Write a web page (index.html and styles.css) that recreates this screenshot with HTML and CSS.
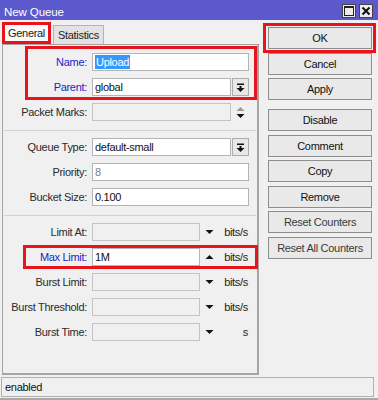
FILE: index.html
```html
<!DOCTYPE html>
<html>
<head>
<meta charset="utf-8">
<title>New Queue</title>
<link rel="stylesheet" href="styles.css">
</head>
<body>
<div class="window">
  <div class="titlebar">
    <span class="title">New Queue</span>
    <div class="wbtns">
      <span class="wbtn"><svg width="12" height="12" viewBox="0 0 12 12"><rect x="1.5" y="1.5" width="9" height="9" fill="none" stroke="#222" stroke-width="1"/><rect x="1.5" y="1.5" width="9" height="1.5" fill="#222"/></svg></span>
      <span class="wbtn"><svg width="12" height="12" viewBox="0 0 12 12"><path d="M2.5 2.5 L9.5 9.5 M9.5 2.5 L2.5 9.5" stroke="#111" stroke-width="2"/></svg></span>
    </div>
  </div>
  <div class="main">
    <div class="leftcol">
      <div class="tabs">
        <div class="tab active">General</div>
        <div class="tab">Statistics</div>
      </div>
      <div class="panel">
        <div class="group hl-np">
          <div class="row">
            <span class="lbl blue">Name:</span>
            <div class="field full"><span class="selected">Upload</span></div>
          </div>
          <div class="row">
            <span class="lbl blue">Parent:</span>
            <div class="field combo">global</div>
            <span class="ddbtn"><svg width="15" height="15" viewBox="0 0 15 15"><rect x="4" y="3.5" width="7" height="1.5" fill="#111"/><rect x="6.5" y="6" width="2" height="2" fill="#111"/><path d="M3.5 8 L11.5 8 L7.5 12 Z" fill="#111"/></svg></span>
          </div>
        </div>
        <div class="row">
          <span class="lbl">Packet Marks:</span>
          <div class="field combo disabled"></div>
          <span class="updown"><svg width="9" height="13" viewBox="0 0 9 13"><path d="M0.5 5 L8.5 5 L4.5 1 Z" fill="#9a9a9a"/><path d="M0.5 8 L8.5 8 L4.5 12 Z" fill="#111"/></svg></span>
        </div>
        <div class="sep"></div>
        <div class="row">
          <span class="lbl">Queue Type:</span>
          <div class="field combo">default-small</div>
          <span class="ddbtn"><svg width="15" height="15" viewBox="0 0 15 15"><rect x="4" y="3.5" width="7" height="1.5" fill="#111"/><rect x="6.5" y="6" width="2" height="2" fill="#111"/><path d="M3.5 8 L11.5 8 L7.5 12 Z" fill="#111"/></svg></span>
        </div>
        <div class="row">
          <span class="lbl">Priority:</span>
          <div class="field full gray">8</div>
        </div>
        <div class="row">
          <span class="lbl">Bucket Size:</span>
          <div class="field full">0.100</div>
        </div>
        <div class="sep"></div>
        <div class="row">
          <span class="lbl">Limit At:</span>
          <div class="field short disabled"></div>
          <span class="arr"><svg width="9" height="6" viewBox="0 0 9 6"><path d="M0.5 1 L8.5 1 L4.5 5 Z" fill="#111"/></svg></span>
          <span class="unit">bits/s</span>
        </div>
        <div class="row hl-max">
          <span class="lbl blue">Max Limit:</span>
          <div class="field short">1M</div>
          <span class="arr"><svg width="9" height="6" viewBox="0 0 9 6"><path d="M0.5 5 L8.5 5 L4.5 1 Z" fill="#111"/></svg></span>
          <span class="unit">bits/s</span>
        </div>
        <div class="row">
          <span class="lbl">Burst Limit:</span>
          <div class="field short disabled"></div>
          <span class="arr"><svg width="9" height="6" viewBox="0 0 9 6"><path d="M0.5 1 L8.5 1 L4.5 5 Z" fill="#111"/></svg></span>
          <span class="unit">bits/s</span>
        </div>
        <div class="row">
          <span class="lbl">Burst Threshold:</span>
          <div class="field short disabled"></div>
          <span class="arr"><svg width="9" height="6" viewBox="0 0 9 6"><path d="M0.5 1 L8.5 1 L4.5 5 Z" fill="#111"/></svg></span>
          <span class="unit">bits/s</span>
        </div>
        <div class="row">
          <span class="lbl">Burst Time:</span>
          <div class="field short disabled"></div>
          <span class="arr"><svg width="9" height="6" viewBox="0 0 9 6"><path d="M0.5 1 L8.5 1 L4.5 5 Z" fill="#111"/></svg></span>
          <span class="unit">s</span>
        </div>
      </div>
    </div>
    <div class="rightcol">
      <div class="btn hl-ok">OK</div>
      <div class="btn">Cancel</div>
      <div class="btn">Apply</div>
      <div class="btn spaced">Disable</div>
      <div class="btn">Comment</div>
      <div class="btn">Copy</div>
      <div class="btn">Remove</div>
      <div class="btn dim">Reset Counters</div>
      <div class="btn dim">Reset All Counters</div>
    </div>
  </div>
  <div class="status">enabled</div>
</div>
</body>
</html>
```
FILE: styles.css
```css
* { box-sizing: border-box; }
html, body { margin: 0; padding: 0; }
body {
  width: 378px;
  height: 400px;
  background: #f0f0f0;
  font-family: "Liberation Sans", Arial, sans-serif;
  font-size: 11px;
  letter-spacing: -0.3px;
  color: #1e1e1e;
  overflow: hidden;
}
.window {
  width: 378px;
  height: 400px;
  display: flex;
  flex-direction: column;
  border-bottom: 2px solid #a8a8a8;
}
.titlebar {
  height: 20px;
  background: #5b59cc;
  display: flex;
  align-items: center;
  justify-content: space-between;
  padding: 0 5px 0 4px;
}
.title {
  color: #fff;
  font-size: 11.5px;
  letter-spacing: -0.1px;
  padding-top: 3px;
}
.wbtns { display: flex; gap: 3px; padding-top: 2px; }
.wbtn {
  width: 14px;
  height: 14px;
  background: #ececec;
  border: 1px solid #444;
  display: flex;
  align-items: center;
  justify-content: center;
}
.main {
  display: flex;
  flex: 1;
}
.leftcol {
  margin-left: 2px;
  width: 257px;
  display: flex;
  flex-direction: column;
}
.tabs {
  margin-top: 2px;
  height: 22px;
  display: flex;
  align-items: flex-end;
  gap: 2px;
}
.tab {
  height: 19px;
  padding: 0 4px;
  background: #e3e3e3;
  border: 1px solid #b5b5b5;
  border-bottom: none;
  display: flex;
  align-items: center;
  color: #222;
}
.tab.active {
  height: 22px;
  width: 49px;
  justify-content: center;
  background: #fafafa;
  border: 3px solid #e8141c;
}
.panel {
  height: 331px;
  border: 1px solid #a5a5a5;
  border-right-width: 2px;
  border-bottom-width: 2px;
  padding-top: 8px;
  display: flex;
  flex-direction: column;
  gap: 7px;
}
.group {
  display: flex;
  flex-direction: column;
  gap: 7px;
  position: relative;
}
.row {
  height: 18px;
  display: flex;
  align-items: center;
}
.lbl {
  flex: 0 0 84px;
  text-align: right;
  margin-right: 5px;
  color: #2a2a2a;
}
.lbl.blue { color: #2323c8; }
.field {
  height: 18px;
  background: #fff;
  border: 1px solid #b4b4b4;
  padding: 0 2px;
  display: flex;
  align-items: center;
  color: #111;
  white-space: nowrap;
}
.field.full { width: 157px; }
.field.combo { width: 139px; }
.field.short { width: 108px; }
.field.disabled { background: #f0f0f0; border-color: #c4c4c4; }
.field.gray { color: #7a7a7a; }
.selected {
  background: #3399ff;
  color: #fff;
  padding: 0 1px;
  line-height: 14px;
}
.ddbtn {
  width: 17px;
  height: 18px;
  margin-left: 1px;
  background: #e8e8e8;
  border: 1px solid #adadad;
  display: flex;
  align-items: center;
  justify-content: center;
}
.updown {
  margin-left: 5px;
  display: flex;
}
.arr {
  margin-left: 5px;
  display: flex;
}
.unit {
  width: 34px;
  text-align: right;
  color: #222;
}
.sep {
  height: 1px;
  margin: 2px 1px 0 1px;
  background: #d2d2d2;
}
.hl-np::after {
  content: "";
  position: absolute;
  top: -7px;
  bottom: -4px;
  left: 22px;
  right: 0px;
  border: 3px solid #e8141c;
  pointer-events: none;
}
.hl-max { position: relative; }
.hl-max::after {
  content: "";
  position: absolute;
  top: -3px;
  bottom: -3px;
  left: 20px;
  right: -1px;
  border: 3px solid #e8141c;
  pointer-events: none;
}
.rightcol {
  margin-left: 9px;
  width: 104px;
  padding-top: 7px;
  display: flex;
  flex-direction: column;
  gap: 3.5px;
}
.btn {
  height: 22px;
  background: #e9e9e9;
  border: 1px solid #8e8e8e;
  display: flex;
  align-items: center;
  justify-content: center;
  color: #111;
  position: relative;
}
.btn.spaced { margin-top: 5.5px; }
.btn.dim { color: #3a3a3a; }
.hl-ok::after {
  content: "";
  position: absolute;
  top: -5px;
  bottom: -5px;
  left: -6px;
  right: -5px;
  border: 3px solid #e8141c;
  pointer-events: none;
}
.status {
  margin: 1px 4px 1px 1px;
  height: 20px;
  border: 1px solid #b0b0b0;
  display: flex;
  align-items: center;
  padding-left: 3px;
  color: #111;
}
```
